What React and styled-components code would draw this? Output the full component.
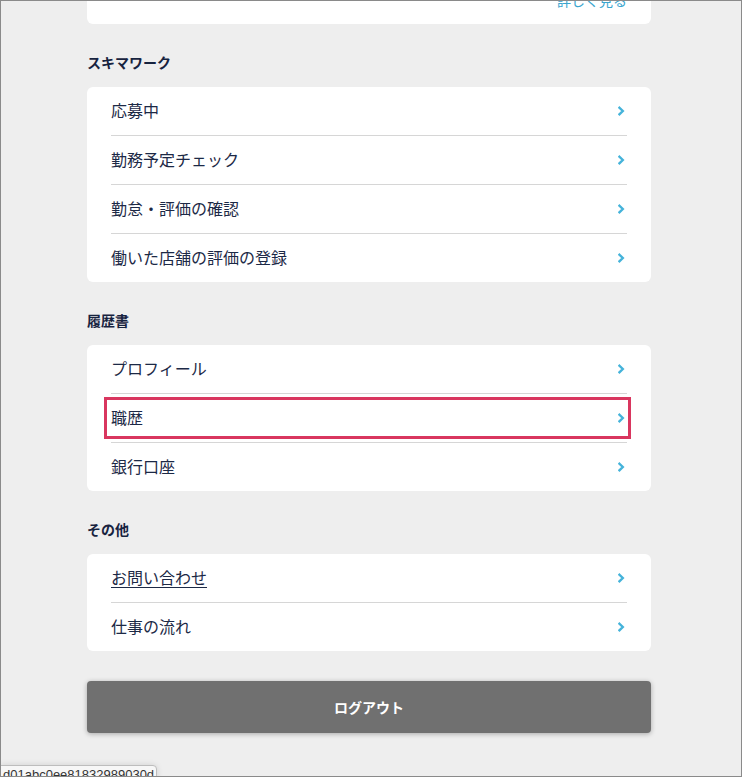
import styled, { createGlobalStyle } from 'styled-components';

const GlobalStyle = createGlobalStyle`
  html, body {
    margin: 0;
    padding: 0;
    background: #eeeeee;
  }
  * { box-sizing: border-box; }
`;

const sections = [
  {
    title: 'スキマワーク',
    items: [
      { label: '応募中' },
      { label: '勤務予定チェック' },
      { label: '勤怠・評価の確認' },
      { label: '働いた店舗の評価の登録' },
    ],
  },
  {
    title: '履歴書',
    items: [
      { label: 'プロフィール' },
      { label: '職歴', active: true },
      { label: '銀行口座' },
    ],
  },
  {
    title: 'その他',
    items: [
      { label: 'お問い合わせ', underline: true },
      { label: '仕事の流れ' },
    ],
  },
];

const Chevron = () => (
  <svg width="7" height="10" viewBox="0 0 7 10">
    <polyline points="1.5,1.8 4.8,5 1.5,8.2" fill="none" stroke="#45b3da" strokeWidth="2.4" strokeLinecap="square" />
  </svg>
);

const App = () => {
  return (
    <Frame>
      <GlobalStyle />
      <Page>
        <TopCard>
          <MoreLink>詳しく見る</MoreLink>
        </TopCard>
        {sections.map((section) => (
          <Section key={section.title}>
            <Heading>{section.title}</Heading>
            <Card>
              {section.items.map((item) => (
                <Row key={item.label}>
                  <Label $underline={item.underline}>{item.label}</Label>
                  <Chevron />
                  {item.active && <Highlight />}
                </Row>
              ))}
            </Card>
          </Section>
        ))}
        <LogoutButton>ログアウト</LogoutButton>
      </Page>
      <StatusBar>d01abc0ee81832989030d</StatusBar>
    </Frame>
  );
};

export default App;

const Frame = styled.div`
  position: relative;
  width: 742px;
  height: 777px;
  border: 1px solid #8a8a8a;
  background: #eeeeee;
  overflow: hidden;
  font-family: "Noto Sans CJK JP", "Noto Sans", sans-serif;
`;

const Page = styled.div`
  padding: 0 90px 0 86px;
  display: flex;
  flex-direction: column;
`;

const TopCard = styled.div`
  margin-top: -29px;
  background: #fff;
  border-radius: 6px;
  padding: 18px 24px 14px;
  display: flex;
  justify-content: flex-end;
`;

const MoreLink = styled.span`
  font-size: 14px;
  line-height: 20px;
  color: #3ba6cf;
`;

const Section = styled.section`
  display: flex;
  flex-direction: column;
`;

const Heading = styled.h3`
  margin: 29px 0 14px;
  font-size: 14px;
  line-height: 19px;
  padding-bottom: 1px;
  font-weight: 700;
  color: #17233f;
`;

const Card = styled.div`
  background: #fff;
  border-radius: 6px;
  padding: 0 24px;
`;

const Row = styled.div`
  position: relative;
  height: 49px;
  display: flex;
  align-items: center;
  justify-content: space-between;
  padding-right: 2px;
  border-bottom: 1px solid #d6d6d6;
  &:last-child {
    height: 48px;
    border-bottom: none;
  }
`;

const Label = styled.span`
  margin-bottom: 2px;
  font-size: 16px;
  color: #1c2946;
  text-decoration: ${(p) => (p.$underline ? 'underline' : 'none')};
  text-underline-offset: 3px;
`;

const Highlight = styled.div`
  position: absolute;
  left: -7px;
  right: -4px;
  top: 3px;
  bottom: 3px;
  border: 3px solid #d9365f;
  pointer-events: none;
`;

const LogoutButton = styled.button`
  margin-top: 30px;
  height: 52px;
  padding-bottom: 2px;
  border: none;
  border-radius: 4px;
  background: #707070;
  color: #fff;
  font-family: inherit;
  font-size: 14px;
  font-weight: 700;
  box-shadow: 0 1px 5px rgba(0, 0, 0, 0.3);
`;

const StatusBar = styled.div`
  position: absolute;
  left: -1px;
  bottom: -6px;
  width: 157px;
  height: 17px;
  padding: 1px 0 0 2px;
  background: #f7f7f7;
  border: 1px solid #bdbdbd;
  border-radius: 0 4px 0 0;
  font-family: "Liberation Sans", sans-serif;
  font-size: 13px;
  line-height: 15px;
  color: #333;
  white-space: nowrap;
  overflow: hidden;
  box-shadow: 0 0 6px rgba(0, 0, 0, 0.12);
`;
